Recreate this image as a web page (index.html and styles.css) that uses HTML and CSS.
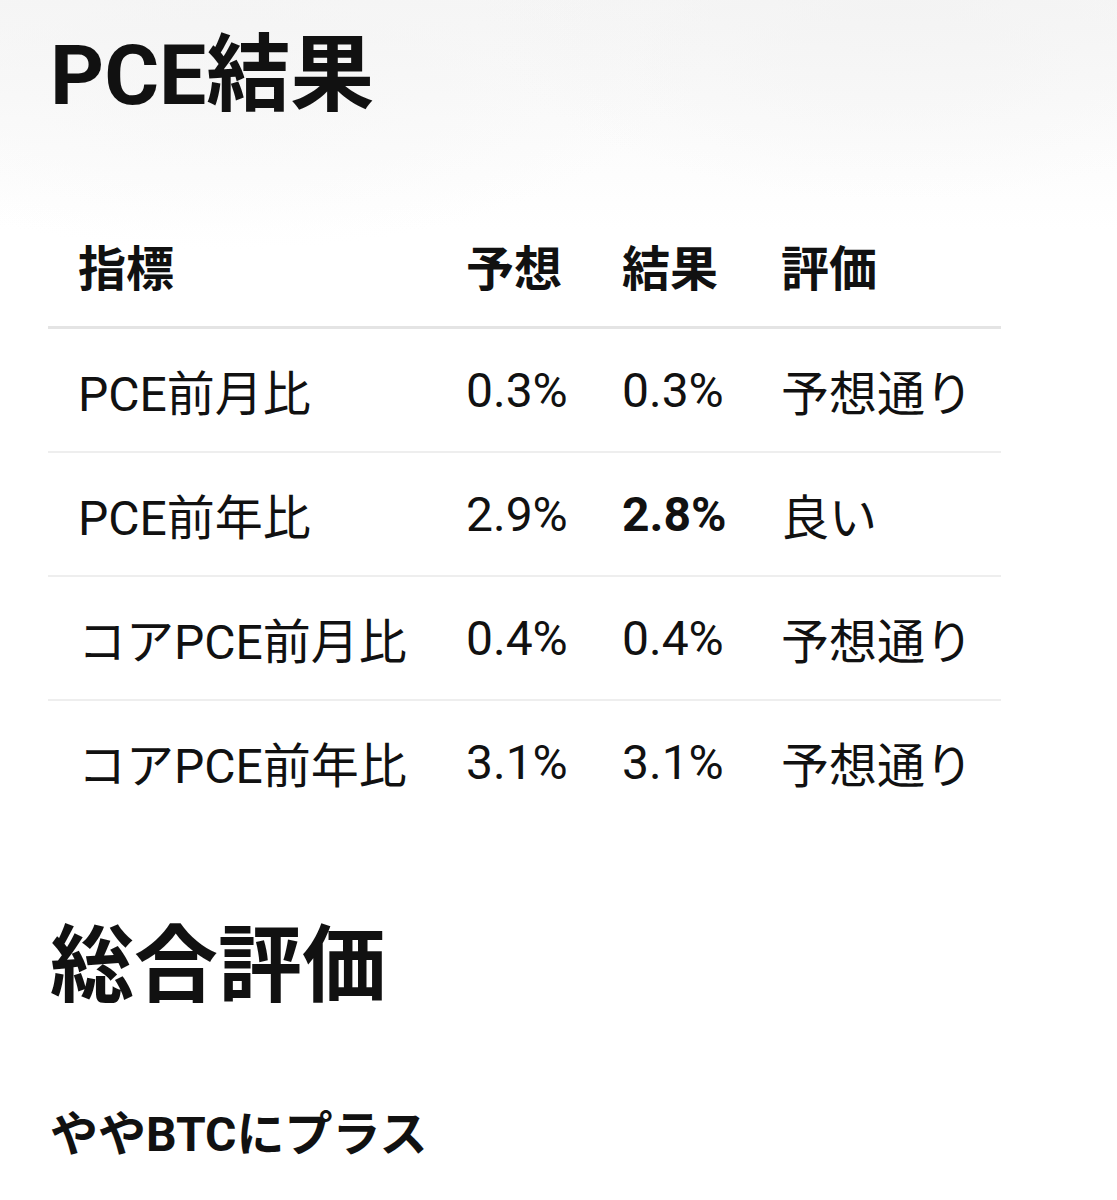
FILE: index.html
```html
<!DOCTYPE html>
<html lang="ja">
<head>
<meta charset="utf-8">
<link rel="stylesheet" href="styles.css">
</head>
<body>
<main class="page">
  <h1 class="title">PCE結果</h1>
  <table class="results">
    <colgroup>
      <col class="c1"><col class="c2"><col class="c3"><col class="c4">
    </colgroup>
    <thead>
      <tr><th>指標</th><th>予想</th><th>結果</th><th>評価</th></tr>
    </thead>
    <tbody>
      <tr><td>PCE前月比</td><td>0.3%</td><td>0.3%</td><td>予想通り</td></tr>
      <tr><td>PCE前年比</td><td>2.9%</td><td><strong>2.8%</strong></td><td>良い</td></tr>
      <tr><td>コアPCE前月比</td><td>0.4%</td><td>0.4%</td><td>予想通り</td></tr>
      <tr><td>コアPCE前年比</td><td>3.1%</td><td>3.1%</td><td>予想通り</td></tr>
    </tbody>
  </table>
  <h2 class="title summary">総合評価</h2>
  <p class="verdict">ややBTCにプラス</p>
</main>
</body>
</html>
```

FILE: styles.css
```css
html, body {
  margin: 0;
  padding: 0;
}
body {
  background:
    radial-gradient(ellipse 420px 200px at 80% 0px, rgba(242,242,242,0.7), rgba(255,255,255,0) 100%),
    radial-gradient(ellipse 500px 230px at 20% 20px, rgba(244,244,244,0.7), rgba(255,255,255,0) 100%),
    linear-gradient(#f6f6f6 0px, #fbfbfb 120px, #ffffff 230px);
  background-repeat: no-repeat;
  color: #111;
  font-family: Roboto, "Noto Sans CJK JP", sans-serif;
  min-height: 1200px;
}
.page {
  padding: 0 0 0 48px;
}
.title {
  font-size: 84px;
  font-weight: 700;
  line-height: 100px;
  margin: 26px 0 0 2px;
  letter-spacing: 0;
}
.results {
  border-collapse: collapse;
  table-layout: fixed;
  width: 953px;
  margin-top: 78px;
  font-size: 48px;
}
.c1 { width: 390px; }
.c2 { width: 156px; }
.c3 { width: 159px; }
.c4 { width: 248px; }
.results th,
.results td {
  text-align: left;
  padding: 0 0 0 28px;
  white-space: nowrap;
  vertical-align: middle;
}
.results th:first-child,
.results td:first-child {
  padding-left: 30px;
}
.results th {
  font-weight: 700;
  height: 122px;
  border-bottom: 3px solid #e4e4e4;
}
.results td {
  font-weight: 400;
  height: 122px;
}
.results tbody tr:not(:last-child) td {
  border-bottom: 2px solid #eeeeee;
}
.results strong {
  font-weight: 700;
}
.summary {
  margin-top: 94px;
}
.verdict {
  font-size: 48px;
  font-weight: 700;
  line-height: 60px;
  margin: 88px 0 0 2px;
}
```
